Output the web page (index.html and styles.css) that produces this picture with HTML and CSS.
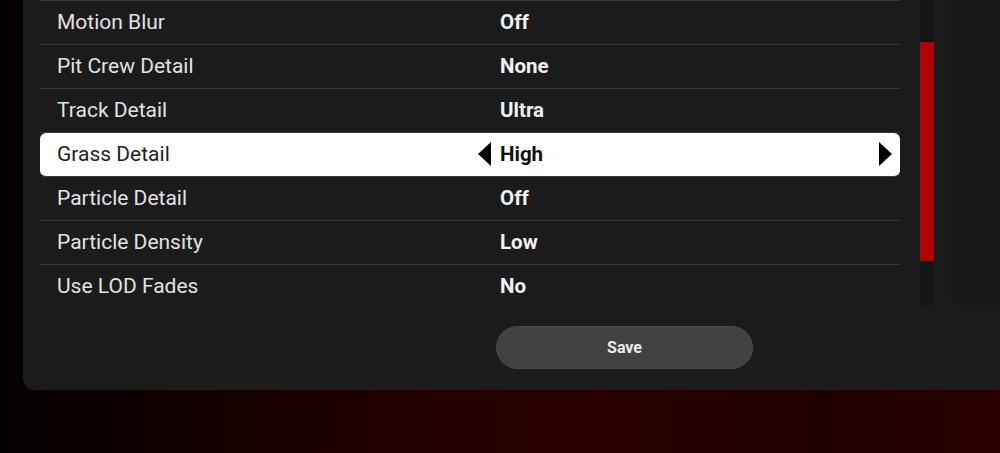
FILE: index.html
```html
<!DOCTYPE html>
<html lang="en">
<head>
    <meta charset="UTF-8">
    <meta name="viewport" content="width=device-width, initial-scale=1.0">
    <title>Graphics Settings</title>
    <link rel="stylesheet" href="styles.css">
</head>
<body>
    <div class="panel">
        <div class="content">
            <div class="list">
                <div class="row">
                    <span class="label">Motion Blur</span>
                    <span class="arrow left"></span>
                    <span class="value">Off</span>
                    <span class="arrow right"></span>
                </div>
                <div class="row">
                    <span class="label">Pit Crew Detail</span>
                    <span class="arrow left"></span>
                    <span class="value">None</span>
                    <span class="arrow right"></span>
                </div>
                <div class="row">
                    <span class="label">Track Detail</span>
                    <span class="arrow left"></span>
                    <span class="value">Ultra</span>
                    <span class="arrow right"></span>
                </div>
                <div class="row selected">
                    <span class="label">Grass Detail</span>
                    <span class="arrow left"></span>
                    <span class="value">High</span>
                    <span class="arrow right"></span>
                </div>
                <div class="row">
                    <span class="label">Particle Detail</span>
                    <span class="arrow left"></span>
                    <span class="value">Off</span>
                    <span class="arrow right"></span>
                </div>
                <div class="row">
                    <span class="label">Particle Density</span>
                    <span class="arrow left"></span>
                    <span class="value">Low</span>
                    <span class="arrow right"></span>
                </div>
                <div class="row">
                    <span class="label">Use LOD Fades</span>
                    <span class="arrow left"></span>
                    <span class="value">No</span>
                    <span class="arrow right"></span>
                </div>
            </div>
            <button class="save">Save</button>
        </div>
        <div class="scrollbar">
            <div class="thumb"></div>
        </div>
        <div class="side"></div>
    </div>
</body>
</html>
```

FILE: styles.css
```css
html, body {
    margin: 0;
    height: 100%;
    overflow: hidden;
}

body {
    background: linear-gradient(90deg, #050000 0%, #140000 20%, #250000 45%, #2a0000 60%, #1f0000 82%, #2a0000 100%);
    font-family: Roboto, "Noto Sans", sans-serif;
}

.panel {
    margin-left: 23px;
    height: 390px;
    background: #1b1b1b;
    border-radius: 0 0 0 12px;
    display: flex;
    align-items: flex-start;
}

.content {
    width: 860px;
    margin-left: 17px;
}

.list {
    border-top: 1px solid #383838;
}

.row {
    height: 44px;
    border-bottom: 1px solid #383838;
    display: grid;
    grid-template-columns: 412px 13px 1fr 13px;
    column-gap: 9px;
    align-items: center;
    padding: 0 8px 1px 17px;
    box-sizing: border-box;
    font-size: 21px;
    color: #e2e2e2;
}

.row:last-child {
    border-bottom: none;
    height: 43px;
}

.row .value {
    font-weight: bold;
    font-size: 20.5px;
    color: #f0f0f0;
}

.row.selected {
    background: #ffffff;
    border-radius: 6px;
    color: #222;
}

.row.selected .value {
    color: #111;
}

.arrow {
    width: 0;
    height: 0;
    border-top: 12.5px solid transparent;
    border-bottom: 12.5px solid transparent;
    visibility: hidden;
}

.arrow.left {
    border-right: 13px solid #000;
}

.arrow.right {
    border-left: 13px solid #000;
}

.row.selected .arrow {
    visibility: visible;
}

.save {
    display: block;
    margin: 18px 0 0 456px;
    width: 257px;
    height: 43px;
    border-radius: 22px;
    background: #414141;
    border: 1px solid #4a4a4a;
    color: #eeeeee;
    font-family: Roboto, "Noto Sans", sans-serif;
    font-weight: bold;
    font-size: 16px;
}

.scrollbar {
    width: 14px;
    height: 305px;
    margin-left: 20px;
    background: #141414;
    padding-top: 42px;
    box-sizing: border-box;
}

.thumb {
    height: 219px;
    background: #b00000;
}

.side {
    flex: 1;
    height: 305px;
    margin-left: 17px;
    background: #161616;
    border-radius: 0 0 0 10px;
}
```
